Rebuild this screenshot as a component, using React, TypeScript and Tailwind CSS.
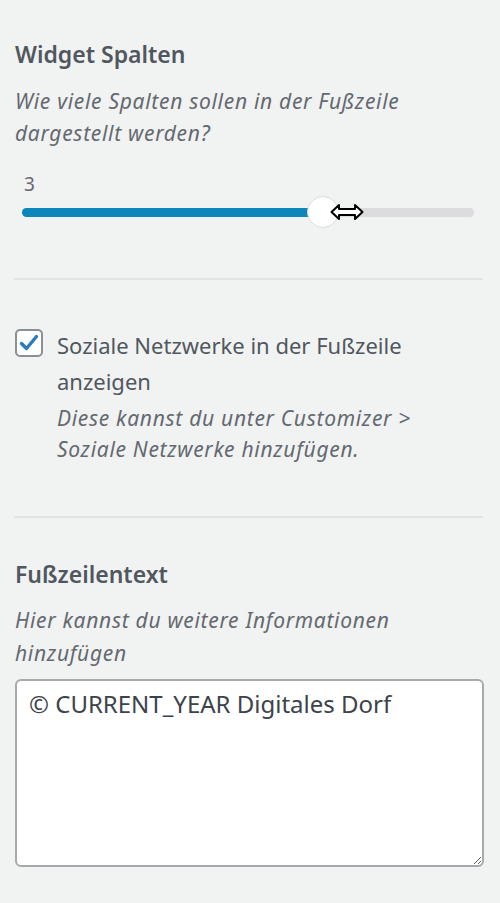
import React from "react";

const font = { fontFamily: '"Noto Sans", "Open Sans", sans-serif' };

const Divider = () => <div className="h-[2px] bg-[#e2e3e4]" />;

export default function App() {
    return (
        <div
            className="min-h-[903px] bg-[#f1f2f2] pl-[15px] pr-[16px] pt-[40px] text-[#50575e]"
            style={font}
        >
            {/* Widget Spalten */}
            <h3 className="text-[23px] font-semibold leading-[28px] text-[#50575e]">Widget Spalten</h3>
            <p className="mt-[17px] text-[21px] italic leading-[32px] tracking-[0.7px] text-[#646970]">
                Wie viele Spalten sollen in der Fußzeile
                <br />
                dargestellt werden?
            </p>
            <div className="mt-[23px] pl-[9px] text-[19px] leading-[24px] text-[#646970]">3</div>
            <div className="relative ml-[7px] mr-[10px] h-[32px]">
                <div className="absolute left-0 right-0 top-[12px] h-[9px] rounded-full bg-[#dcdcde]" />
                <div className="absolute left-0 top-[12px] h-[9px] w-[301px] rounded-full bg-[#0c86bb]" />
                <div className="absolute left-[285px] top-0 h-[32px] w-[32px] rounded-full border border-[#dcdcde] bg-white" />
                {/* cursor */}
                <svg className="absolute left-[308px] top-[7px]" width="34" height="18" viewBox="0 0 34 18">
                    <path
                        d="M1.5 9 L9 2 L9 6 L25 6 L25 2 L32.5 9 L25 16 L25 12 L9 12 L9 16 Z"
                        fill="white"
                        stroke="black"
                        strokeWidth="2"
                        strokeLinejoin="round"
                    />
                </svg>
            </div>
            <div className="mt-[50px] mr-[1px] ml-[-1px]">
                <Divider />
            </div>

            {/* Soziale Netzwerke */}
            <div className="mt-[47px] flex gap-[14px]">
                <div className="mt-[2px] flex h-[28px] w-[28px] shrink-0 items-center justify-center rounded-[5px] border-2 border-[#8c8f94] bg-white">
                    <svg width="20" height="18" viewBox="0 0 20 18">
                        <path d="M2.5 9.5 L7.5 14.5 L17.5 2.5" fill="none" stroke="#2b7bc0" strokeWidth="3.4" strokeLinecap="round" strokeLinejoin="round" />
                    </svg>
                </div>
                <div>
                    <div className="text-[22px] leading-[36px] text-[#50575e]">
                        Soziale Netzwerke in der Fußzeile
                        <br />
                        anzeigen
                    </div>
                    <p className="mt-[4px] text-[21px] italic leading-[31px] tracking-[0.7px] text-[#646970]">
                        Diese kannst du unter Customizer &gt;
                        <br />
                        Soziale Netzwerke hinzufügen.
                    </p>
                </div>
            </div>
            <div className="mt-[51px] mr-[1px] ml-[-1px]">
                <Divider />
            </div>

            {/* Fußzeilentext */}
            <h3 className="mt-[42px] text-[23px] font-semibold leading-[28px] text-[#50575e]">Fußzeilentext</h3>
            <p className="mt-[16px] text-[21px] italic leading-[33px] tracking-[0.7px] text-[#646970]">
                Hier kannst du weitere Informationen
                <br />
                hinzufügen
            </p>
            <textarea
                readOnly
                defaultValue="© CURRENT_YEAR Digitales Dorf"
                className="mt-[9px] block h-[188px] w-[469px] rounded-[6px] border-2 border-[#a7aaad] bg-white px-[12px] py-[6px] text-[24px] leading-[33px] text-[#3c434a] outline-none"
                style={font}
            />
        </div>
    );
}
